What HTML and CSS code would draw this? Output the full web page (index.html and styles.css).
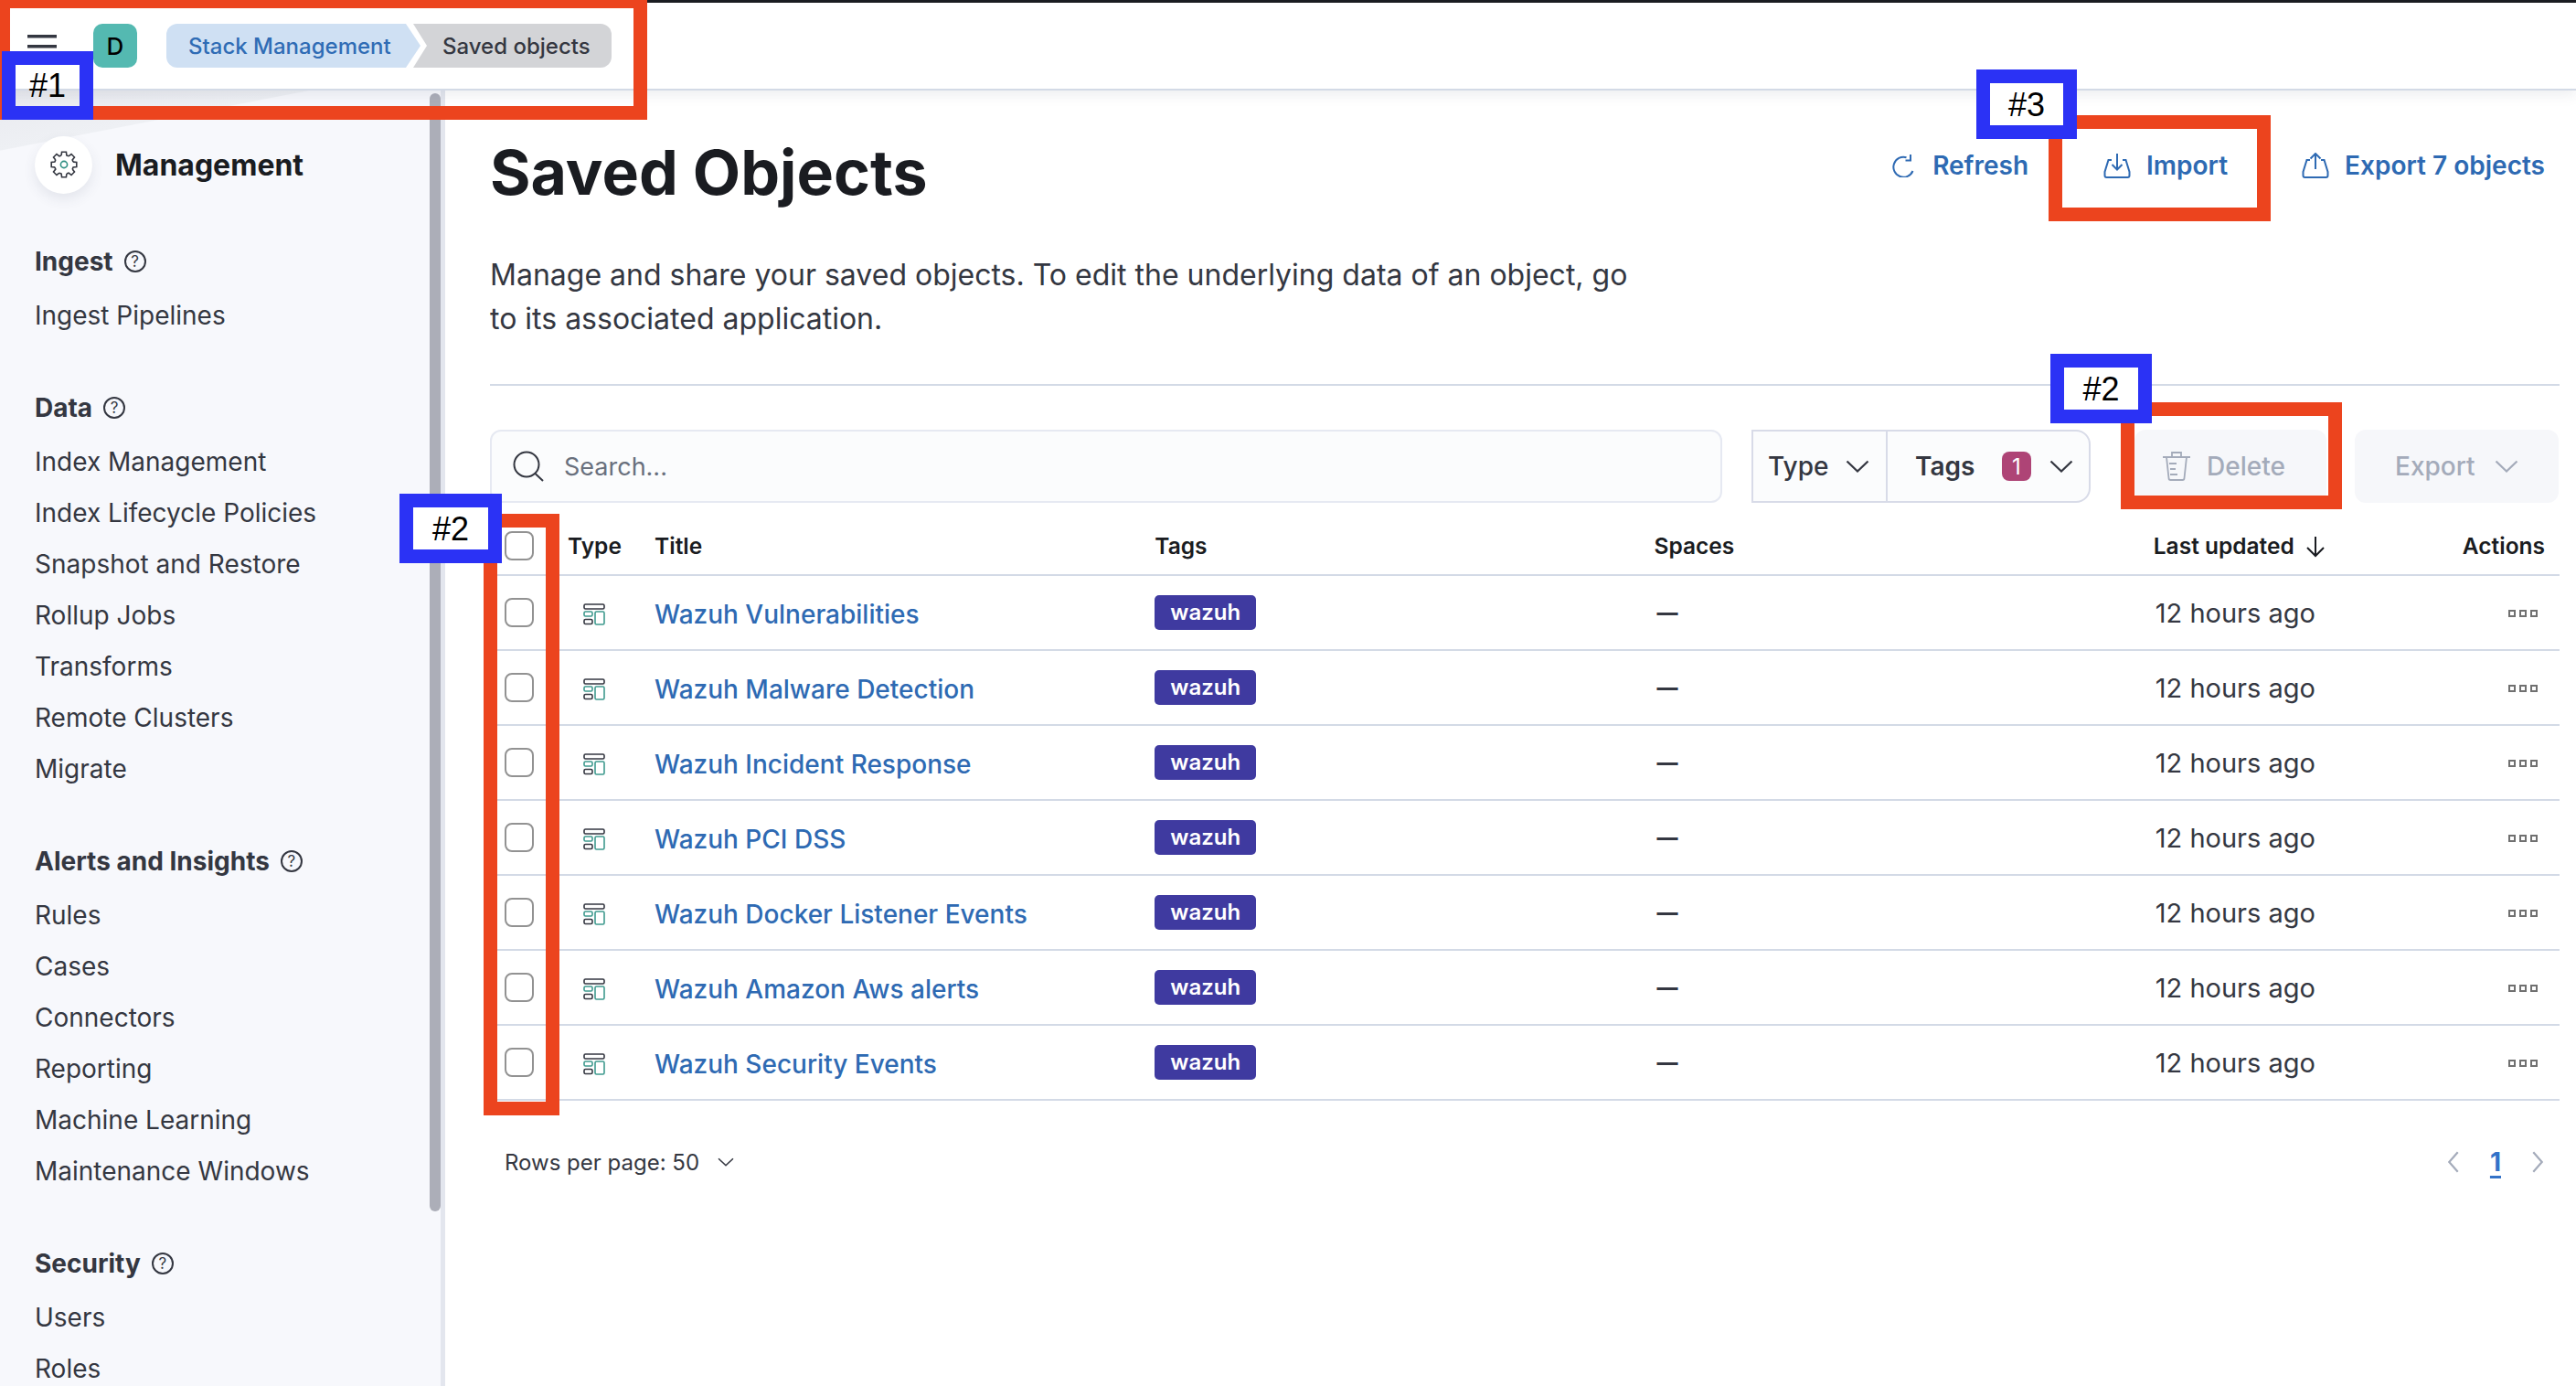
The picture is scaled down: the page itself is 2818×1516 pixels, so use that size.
FILE: index.html
```html
<!DOCTYPE html>
<html>
<head>
    <title>Saved Objects</title>
    <link rel="stylesheet" href="styles.css">
</head>
<body>
    <svg class="defs" width="0" height="0">
        <symbol id="dash" viewBox="0 0 24 24">
            <rect x="1" y="1" width="22" height="5" rx="1.5" fill="none" stroke="#343741" stroke-width="1.6"/>
            <rect x="1" y="9" width="9" height="5" rx="1.5" fill="none" stroke="#3f9a8e" stroke-width="1.6"/>
            <rect x="13" y="9" width="10" height="14" rx="1.5" fill="none" stroke="#3f9a8e" stroke-width="1.6"/>
            <rect x="1" y="17.5" width="9" height="5" rx="1.5" fill="none" stroke="#343741" stroke-width="1.6"/>
        </symbol>
        <symbol id="chev" viewBox="0 0 26 14">
            <path d="M1.5 1.5L13 12.5 24.5 1.5" fill="none" stroke="currentColor" stroke-width="2.2"/>
        </symbol>
    </svg>

    <header class="topbar">
        <svg class="burger" viewBox="0 0 32 25"><rect width="32" height="3.5" fill="#343741"/><rect y="11" width="32" height="3.5" fill="#343741"/><rect y="22" width="32" height="3" fill="#343741"/></svg>
        <div class="avatar">D</div>
        <nav class="crumbs">
            <a class="crumb crumb-link">Stack Management</a>
            <span class="crumb crumb-last">Saved objects</span>
        </nav>
    </header>

    <div class="layout">
        <aside class="sidebar">
            <div class="side-title">
                <span class="logo-wrap">
                    <svg class="gear" viewBox="0 0 32 32" fill="none" stroke="#343741" stroke-width="1.6">
                        <path id="tooth" d="M13.11 5.91L13.57 2.21H18.43L18.89 5.91L21.09 6.82"/>
                        <path d="M13.11 5.91L13.57 2.21H18.43L18.89 5.91L21.09 6.82" transform="rotate(45 16 16)"/>
                        <path d="M13.11 5.91L13.57 2.21H18.43L18.89 5.91L21.09 6.82" transform="rotate(90 16 16)"/>
                        <path d="M13.11 5.91L13.57 2.21H18.43L18.89 5.91L21.09 6.82" transform="rotate(135 16 16)"/>
                        <path d="M13.11 5.91L13.57 2.21H18.43L18.89 5.91L21.09 6.82" transform="rotate(180 16 16)"/>
                        <path d="M13.11 5.91L13.57 2.21H18.43L18.89 5.91L21.09 6.82" transform="rotate(225 16 16)"/>
                        <path d="M13.11 5.91L13.57 2.21H18.43L18.89 5.91L21.09 6.82" transform="rotate(270 16 16)"/>
                        <path d="M13.11 5.91L13.57 2.21H18.43L18.89 5.91L21.09 6.82" transform="rotate(315 16 16)"/>
                        <circle cx="16" cy="16" r="3.6" stroke="#2f8f83"/>
                    </svg>
                </span>
                <span>Management</span>
            </div>

            <div class="side-group">
                <div class="side-head">Ingest <span class="help">?</span></div>
                <div class="side-item">Ingest Pipelines</div>
            </div>
            <div class="side-group">
                <div class="side-head">Data <span class="help">?</span></div>
                <div class="side-item">Index Management</div>
                <div class="side-item">Index Lifecycle Policies</div>
                <div class="side-item">Snapshot and Restore</div>
                <div class="side-item">Rollup Jobs</div>
                <div class="side-item">Transforms</div>
                <div class="side-item">Remote Clusters</div>
                <div class="side-item">Migrate</div>
            </div>
            <div class="side-group">
                <div class="side-head">Alerts and Insights <span class="help">?</span></div>
                <div class="side-item">Rules</div>
                <div class="side-item">Cases</div>
                <div class="side-item">Connectors</div>
                <div class="side-item">Reporting</div>
                <div class="side-item">Machine Learning</div>
                <div class="side-item">Maintenance Windows</div>
            </div>
            <div class="side-group">
                <div class="side-head">Security <span class="help">?</span></div>
                <div class="side-item">Users</div>
                <div class="side-item">Roles</div>
            </div>
            <div class="thumb"></div>
        </aside>

        <main class="content">
            <div class="page-head">
                <h1>Saved Objects</h1>
                <div class="page-actions">
                    <a class="action action-refresh">
                        <svg class="ic-refresh" viewBox="0 0 24 26" fill="none" stroke="currentColor" stroke-width="2"><path d="M15.5 4.2A11 11 0 1 0 22.5 19"/><path d="M20 1v6.5h-5.5"/></svg>
                        Refresh
                    </a>
                    <a class="action action-import">
                        <svg class="ic-tray" viewBox="0 0 30 28" fill="none" stroke="currentColor" stroke-width="2"><path d="M9 8H5.5L1.5 21v4a2 2 0 0 0 2 2h23a2 2 0 0 0 2-2v-4L24.5 8H21"/><path d="M15 1v17M9.5 13l5.5 5.5 5.5-5.5"/></svg>
                        Import
                    </a>
                    <a class="action action-export">
                        <svg class="ic-tray" viewBox="0 0 30 28" fill="none" stroke="currentColor" stroke-width="2"><path d="M9 8H5.5L1.5 21v4a2 2 0 0 0 2 2h23a2 2 0 0 0 2-2v-4L24.5 8H21"/><path d="M15 18V1M9.5 6.5L15 1l5.5 5.5"/></svg>
                        Export 7 objects
                    </a>
                </div>
            </div>
            <p class="intro">Manage and share your saved objects. To edit the underlying data of an object, go to its associated application.</p>
            <hr class="rule">

            <div class="toolbar">
                <div class="search">
                    <svg class="ic-search" viewBox="0 0 34 34" fill="none" stroke="#343741" stroke-width="2"><circle cx="15" cy="15" r="13.5"/><path d="M24.5 25L33 33"/></svg>
                    <span>Search...</span>
                </div>
                <div class="filters">
                    <div class="filter filter-type">Type <svg class="chev"><use href="#chev"/></svg></div>
                    <div class="filter filter-tags"><b>Tags</b> <span class="count">1</span> <svg class="chev"><use href="#chev"/></svg></div>
                </div>
                <button class="btn btn-delete">
                    <svg class="ic-trash" viewBox="0 0 32 32" fill="none" stroke="currentColor" stroke-width="1.8"><path d="M1 6h30M11 6V1h10v5M5 6l2.5 23a2 2 0 0 0 2 2h13a2 2 0 0 0 2-2L27 6M8 13h8M9 19h6M9 25h8"/></svg>
                    Delete
                </button>
                <button class="btn btn-export">Export <svg class="chev"><use href="#chev"/></svg></button>
            </div>

            <table class="objects">
                <thead>
                    <tr>
                        <th class="col-check"><span class="box"></span></th>
                        <th class="col-type">Type</th>
                        <th class="col-title">Title</th>
                        <th class="col-text">Tags</th>
                        <th class="col-text">Spaces</th>
                        <th class="col-date">Last updated <span class="sort">
                            <svg viewBox="0 0 22 24" fill="none" stroke="currentColor" stroke-width="2"><path d="M11 1v21M2 13l9 9 9-9"/></svg></span></th>
                        <th class="col-actions">Actions</th>
                    </tr>
                </thead>
                <tbody>
                    <tr>
                        <td class="col-check"><span class="box"></span></td>
                        <td class="col-type"><svg class="ic-dash"><use href="#dash"/></svg></td>
                        <td class="col-title"><a class="title-link">Wazuh Vulnerabilities</a></td>
                        <td><span class="tag">wazuh</span></td>
                        <td class="spaces">—</td>
                        <td class="updated">12 hours ago</td>
                        <td class="col-actions"><span class="dots"><i></i><i></i><i></i></span></td>
                    </tr>
                    <tr>
                        <td class="col-check"><span class="box"></span></td>
                        <td class="col-type"><svg class="ic-dash"><use href="#dash"/></svg></td>
                        <td class="col-title"><a class="title-link">Wazuh Malware Detection</a></td>
                        <td><span class="tag">wazuh</span></td>
                        <td class="spaces">—</td>
                        <td class="updated">12 hours ago</td>
                        <td class="col-actions"><span class="dots"><i></i><i></i><i></i></span></td>
                    </tr>
                    <tr>
                        <td class="col-check"><span class="box"></span></td>
                        <td class="col-type"><svg class="ic-dash"><use href="#dash"/></svg></td>
                        <td class="col-title"><a class="title-link">Wazuh Incident Response</a></td>
                        <td><span class="tag">wazuh</span></td>
                        <td class="spaces">—</td>
                        <td class="updated">12 hours ago</td>
                        <td class="col-actions"><span class="dots"><i></i><i></i><i></i></span></td>
                    </tr>
                    <tr>
                        <td class="col-check"><span class="box"></span></td>
                        <td class="col-type"><svg class="ic-dash"><use href="#dash"/></svg></td>
                        <td class="col-title"><a class="title-link">Wazuh PCI DSS</a></td>
                        <td><span class="tag">wazuh</span></td>
                        <td class="spaces">—</td>
                        <td class="updated">12 hours ago</td>
                        <td class="col-actions"><span class="dots"><i></i><i></i><i></i></span></td>
                    </tr>
                    <tr>
                        <td class="col-check"><span class="box"></span></td>
                        <td class="col-type"><svg class="ic-dash"><use href="#dash"/></svg></td>
                        <td class="col-title"><a class="title-link">Wazuh Docker Listener Events</a></td>
                        <td><span class="tag">wazuh</span></td>
                        <td class="spaces">—</td>
                        <td class="updated">12 hours ago</td>
                        <td class="col-actions"><span class="dots"><i></i><i></i><i></i></span></td>
                    </tr>
                    <tr>
                        <td class="col-check"><span class="box"></span></td>
                        <td class="col-type"><svg class="ic-dash"><use href="#dash"/></svg></td>
                        <td class="col-title"><a class="title-link">Wazuh Amazon Aws alerts</a></td>
                        <td><span class="tag">wazuh</span></td>
                        <td class="spaces">—</td>
                        <td class="updated">12 hours ago</td>
                        <td class="col-actions"><span class="dots"><i></i><i></i><i></i></span></td>
                    </tr>
                    <tr>
                        <td class="col-check"><span class="box"></span></td>
                        <td class="col-type"><svg class="ic-dash"><use href="#dash"/></svg></td>
                        <td class="col-title"><a class="title-link">Wazuh Security Events</a></td>
                        <td><span class="tag">wazuh</span></td>
                        <td class="spaces">—</td>
                        <td class="updated">12 hours ago</td>
                        <td class="col-actions"><span class="dots"><i></i><i></i><i></i></span></td>
                    </tr>
                </tbody>
            </table>

            <div class="table-foot">
                <div class="rows-per">Rows per page: 50 <svg class="chev-small"><use href="#chev"/></svg></div>
                <div class="pager">
                    <svg class="pg-arrow" viewBox="0 0 14 28" fill="none" stroke="#a5acbb" stroke-width="2.6"><path d="M12.5 1.5L1.5 14l11 12.5"/></svg>
                    <span class="pg-num">1</span>
                    <svg class="pg-arrow" viewBox="0 0 14 28" fill="none" stroke="#a5acbb" stroke-width="2.6"><path d="M1.5 1.5L12.5 14l-11 12.5"/></svg>
                </div>
            </div>
        </main>
    </div>

    <!-- annotations drawn on top of the screenshot -->
    <div class="mark red red-crumbs"></div>
    <div class="mark red red-import"></div>
    <div class="mark red red-delete"></div>
    <div class="mark red red-checks"></div>
    <div class="mark blue blue-one">#1</div>
    <div class="mark blue blue-three">#3</div>
    <div class="mark blue blue-two-top">#2</div>
    <div class="mark blue blue-two-left">#2</div>
</body>
</html>
```

FILE: styles.css
```css
* { box-sizing: border-box; }
html, body { margin: 0; height: 100%; overflow: hidden; }
body { font-family: Inter, "Noto Sans", sans-serif; font-size: 28px; color: #343741; background: #fff; }
.defs { position: absolute; }

/* top bar */
.topbar { height: 99px; display: flex; align-items: center; padding-left: 30px; background: #fff; border-top: 3px solid #1a1c21; border-bottom: 2px solid #d3dae6; position: relative; z-index: 2; box-shadow: 0 4px 14px rgba(60, 70, 100, 0.1); }
.burger { width: 32px; height: 25px; margin-right: 40px; flex: none; }
.avatar { width: 48px; height: 48px; border-radius: 10px; background: #54b9b1; color: #000; font-size: 26px; font-weight: 500; display: flex; align-items: center; justify-content: center; }
.crumbs { display: flex; margin-left: 32px; }
.crumb { height: 48px; display: flex; align-items: center; font-size: 24px; font-weight: 500; }
.crumb-link { width: 278px; padding-left: 24px; color: #2f6cb5; background: #cfe0f3; border-radius: 12px 0 0 12px; clip-path: polygon(0 0, calc(100% - 16px) 0, 100% 50%, calc(100% - 16px) 100%, 0 100%); }
.crumb-last { width: 217px; margin-left: -8px; padding-left: 32px; color: #343741; background: #d3d4d7; border-radius: 0 12px 12px 0; clip-path: polygon(0 0, 100% 0, 100% 100%, 0 100%, 15px 50%); }

.layout { display: flex; height: calc(100% - 99px); }

/* side nav */
.sidebar { width: 487px; flex: none; padding: 49px 0 0 38px; background: linear-gradient(169deg, #e9eaef 0, #eef0f4 64px, #f7f8fc 65px); border-right: 5px solid #e3e6ee; position: relative; overflow: hidden; }
.side-title { display: flex; align-items: center; gap: 25px; height: 64px; margin-bottom: 43px; font-size: 32px; font-weight: 700; color: #1a1c21; }
.logo-wrap { width: 63px; height: 63px; border-radius: 50%; background: #fff; display: flex; align-items: center; justify-content: center; box-shadow: 0 6px 14px rgba(60, 70, 100, 0.1); }
.gear { width: 32px; height: 32px; }
.side-group { margin-bottom: 42px; }
.side-head { height: 62px; display: flex; align-items: center; gap: 12px; font-weight: 700; }
.help { width: 24px; height: 24px; border: 2px solid #343741; border-radius: 50%; font-size: 17px; font-weight: 400; display: flex; align-items: center; justify-content: center; }
.side-item { height: 56px; line-height: 56px; }
.thumb { position: absolute; top: 3px; right: 0; width: 12px; height: 1223px; border-radius: 6px; background: #acaeb8; }

/* main */
.content { flex: 1; padding: 0 18px 0 49px; }
.page-head { display: flex; justify-content: space-between; height: 178px; }
h1 { margin: 41px 0 0; font-size: 68px; line-height: 96px; font-weight: 700; color: #1a1c21; }
.page-actions { display: flex; margin: 56px 16px 0 0; height: 52px; align-items: center; }
.action { display: flex; align-items: center; gap: 17px; font-size: 28px; font-weight: 600; color: #2e6ab3; }
.action-import { margin-left: 82px; }
.action-export { margin-left: 81px; }
.ic-refresh { width: 24px; height: 26px; margin-right: 3px; }
.ic-tray { width: 30px; height: 28px; }
.intro { margin: 0; width: 1280px; font-size: 32px; line-height: 48px; }
.rule { margin: 47px 0 0; border: 0; border-top: 2px solid #d3dae6; }

.toolbar { display: flex; margin-top: 48px; height: 80px; }
.search { width: 1348px; display: flex; align-items: center; padding-left: 23px; gap: 22px; font-size: 27px; color: #69707d; background: #fbfcfd; border: 2px solid #e6e9f2; border-radius: 12px; }
.ic-search { width: 34px; height: 34px; }
.filters { display: flex; margin-left: 32px; width: 371px; background: #fbfcfd; border: 2px solid #d8dbe8; border-radius: 0 16px 16px 0; }
.filter { display: flex; align-items: center; }
.filter-type { width: 147px; padding-left: 16px; justify-content: space-between; padding-right: 18px; font-weight: 500; border-right: 2px solid #d8dbe8; }
.filter-tags { flex: 1; padding-left: 30px; padding-right: 17px; }
.filter-tags b { font-weight: 600; }
.count { width: 32px; height: 32px; margin-left: auto; margin-right: 20px; border-radius: 8px; background: #ae4476; color: #fff; font-size: 24px; display: flex; align-items: center; justify-content: center; }
.chev { width: 26px; height: 14px; color: #343741; flex: none; }
.btn { height: 80px; border: 0; border-radius: 12px; background: #f6f7fa; color: #a4abba; font: 500 28px Inter, sans-serif; display: flex; align-items: center; }
.btn-delete { width: 210px; margin-left: 48px; padding-left: 30px; gap: 17px; }
.ic-trash { width: 32px; height: 32px; }
.btn-export { width: 223px; margin-left: 31px; padding-left: 44px; gap: 21px; }
.btn-export .chev { color: #a4abba; }

/* table */
.objects { width: 100%; border-collapse: separate; border-spacing: 0; table-layout: fixed; }
.objects th, .objects td { padding: 0; text-align: left; border-bottom: 2px solid #d3dae6; }
.objects th { height: 80px; padding-top: 15px; font-size: 24.5px; font-weight: 600; color: #1a1c21; }
.objects td { height: 82px; }
.objects .col-check { width: 85px; padding-left: 16px; }
.objects .col-type { width: 95px; }
.objects .col-title { width: 547px; }
.objects td.col-title { padding-top: 3px; }
.objects .col-text { width: 546px; }
.objects .col-date { width: 284px; }
.objects .col-actions { width: 160px; text-align: right; padding-right: 16px; }
.objects td.col-actions { padding-right: 24px; }
.box { display: block; width: 32px; height: 32px; border: 2px solid #929292; border-radius: 8px; background: #fff; }
.ic-dash { display: block; width: 24px; height: 24px; margin: 4px 0 0 17px; }
.title-link { color: #2e6ab3; font-weight: 500; }
.tag { display: inline-block; width: 111px; height: 38px; line-height: 37px; text-align: center; border-radius: 5px; background: #3f3aa0; color: #fff; font-size: 24px; font-weight: 600; }
.objects td.spaces { padding-left: 3px; font-size: 23px; font-weight: 800; }
.objects td.updated { padding-left: 2px; font-size: 29px; }
.sort svg { width: 22px; height: 24px; vertical-align: -4px; margin-left: 6px; }
.dots { display: inline-flex; gap: 4px; vertical-align: middle; margin-bottom: 3px; }
.dots i { width: 8px; height: 8px; border: 2px solid #707070; }

.table-foot { display: flex; justify-content: space-between; align-items: center; height: 134px; padding: 0 18px 0 16px; }
.rows-per { display: flex; align-items: center; gap: 20px; font-size: 24px; }
.chev-small { width: 18px; height: 10px; }
.pager { display: flex; align-items: center; gap: 34px; }
.pg-arrow { width: 12px; height: 26px; }
.pg-num { color: #3372c8; font-weight: 700; text-decoration: underline; text-underline-offset: 5px; text-decoration-thickness: 3px; }

/* annotation boxes */
.mark { position: absolute; z-index: 5; }
.red { border: 15px solid #ec441e; }
.blue { border: 15px solid #2b32f5; padding-top: 2px; background: #fff; font-family: "Liberation Sans", Arial, sans-serif; font-size: 36px; color: #000; display: flex; align-items: center; justify-content: center; }
.red-crumbs { left: -4px; top: 0; width: 712px; height: 131px; border-top-width: 9px; }
.red-import { left: 2241px; top: 126px; width: 243px; height: 116px; }
.red-delete { left: 2320px; top: 440px; width: 242px; height: 117px; }
.red-checks { left: 529px; top: 562px; width: 83px; height: 658px; }
.blue-one { left: 2px; top: 56px; width: 100px; height: 75px; padding-top: 0; background: transparent; }
.blue-three { left: 2162px; top: 76px; width: 110px; height: 76px; }
.blue-two-top { left: 2243px; top: 387px; width: 111px; height: 76px; }
.blue-two-left { left: 437px; top: 540px; width: 112px; height: 76px; }
```
